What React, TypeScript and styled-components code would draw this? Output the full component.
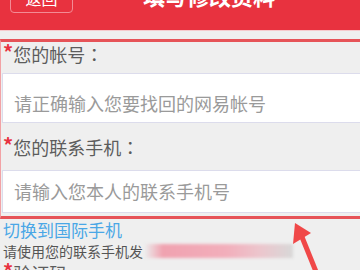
import styled, { createGlobalStyle } from 'styled-components'

const GlobalStyle = createGlobalStyle`
  html, body {
    margin: 0;
    padding: 0;
    background: #efefef;
    overflow: hidden;
  }
  body {
    font-family: "Noto Sans CJK SC", "Noto Sans", sans-serif;
  }
`

const Page = styled.div`
  position: relative;
  width: 360px;
  height: 294px;
  margin-top: -24px;
  overflow: hidden;
`

const Header = styled.header`
  height: 54px;
  background: #e8323f;
  border-bottom: 1px solid #f6c9cc;
  display: flex;
  align-items: flex-start;
  padding-left: 10px;
`

const BackButton = styled.button`
  margin-top: 7px;
  width: 63px;
  height: 30px;
  border: 1px solid #f38b95;
  border-radius: 4px;
  background: transparent;
  color: #fff;
  font-family: inherit;
  font-size: 16px;
  line-height: 20px;
  padding: 0;
`

const Title = styled.h1`
  margin: 8px 0 0 70px;
  font-size: 22px;
  line-height: 22px;
  font-weight: bold;
  color: #fff;
`

const Marked = styled.section`
  margin: 8px -10px 0 0;
  border: 3px solid #e65358;
  border-right: none;
  border-left-width: 1px;
  border-left-color: #f2a2a5;
  padding-bottom: 3px;
`

const Label = styled.div<{ $top: number; $h: number }>`
  height: ${(p) => p.$h}px;
  padding: ${(p) => p.$top}px 0 0 2px;
  box-sizing: border-box;
  font-family: "Noto Sans CJK TC", "Noto Sans CJK SC", sans-serif;
  font-size: 18px;
  line-height: 24px;
  color: #5c5c5c;
  display: flex;
  align-items: flex-start;
`

const Star = styled.span`
  color: #e8323f;
  font-weight: bold;
  font-size: 20px;
  line-height: 20px;
  margin-right: 0;
`

const Field = styled.div<{ $h: number; $top: number }>`
  height: ${(p) => p.$h}px;
  margin-left: 1px;
  box-sizing: border-box;
  background: #fff;
  border: 1px solid #dcdcec;
  border-right: none;
  padding: ${(p) => p.$top}px 0 0 11px;
  font-size: 18px;
  line-height: 24px;
  color: #9a9a9a;
`

const Below = styled.div`
  padding-left: 3px;
`

const Link = styled.div`
  font-size: 17px;
  line-height: 22px;
  color: #4aa7e6;
`

const Note = styled.div`
  font-size: 14px;
  line-height: 20px;
  color: #555;
  display: flex;
  align-items: center;
`

const Blur = styled.span`
  display: inline-block;
  width: 148px;
  height: 14px;
  margin-left: 2px;
  background: linear-gradient(90deg, #ececec 0%, #f0a2b0 12%, #f2aebb 55%, #ecc6cd 78%, #d8d8d8 100%);
  filter: blur(1.5px);
`

const NextLabel = styled.div`
  font-size: 18px;
  line-height: 24px;
  color: #5c5c5c;
  display: flex;
  align-items: flex-start;
`

const Arrow = styled.svg`
  position: absolute;
  left: 285px;
  top: 241px;
`

export default function App() {
  return (
    <>
      <GlobalStyle />
      <Page>
        <Header>
          <BackButton>返回</BackButton>
          <Title>填写修改资料</Title>
        </Header>
        <Marked>
          <Label $top={0} $h={31}>
            <Star>*</Star>您的帐号：
          </Label>
          <Field $h={50} $top={17}>请正确输入您要找回的网易帐号</Field>
          <Label $top={12} $h={47}>
            <Star>*</Star>您的联系手机：
          </Label>
          <Field $h={43} $top={8}>请输入您本人的联系手机号</Field>
        </Marked>
        <Below>
          <Link>切换到国际手机</Link>
          <Note>
            请使用您的联系手机发<Blur />
          </Note>
          <NextLabel>
            <Star>*</Star>验证码
          </NextLabel>
        </Below>
        <Arrow width="50" height="60" viewBox="0 0 50 60">
          <path d="M34 62 L17 20" stroke="#f04848" strokeWidth="5" fill="none" />
          <path d="M10 6 L8 27 L26 16 Z" fill="#f04848" />
        </Arrow>
      </Page>
    </>
  )
}
